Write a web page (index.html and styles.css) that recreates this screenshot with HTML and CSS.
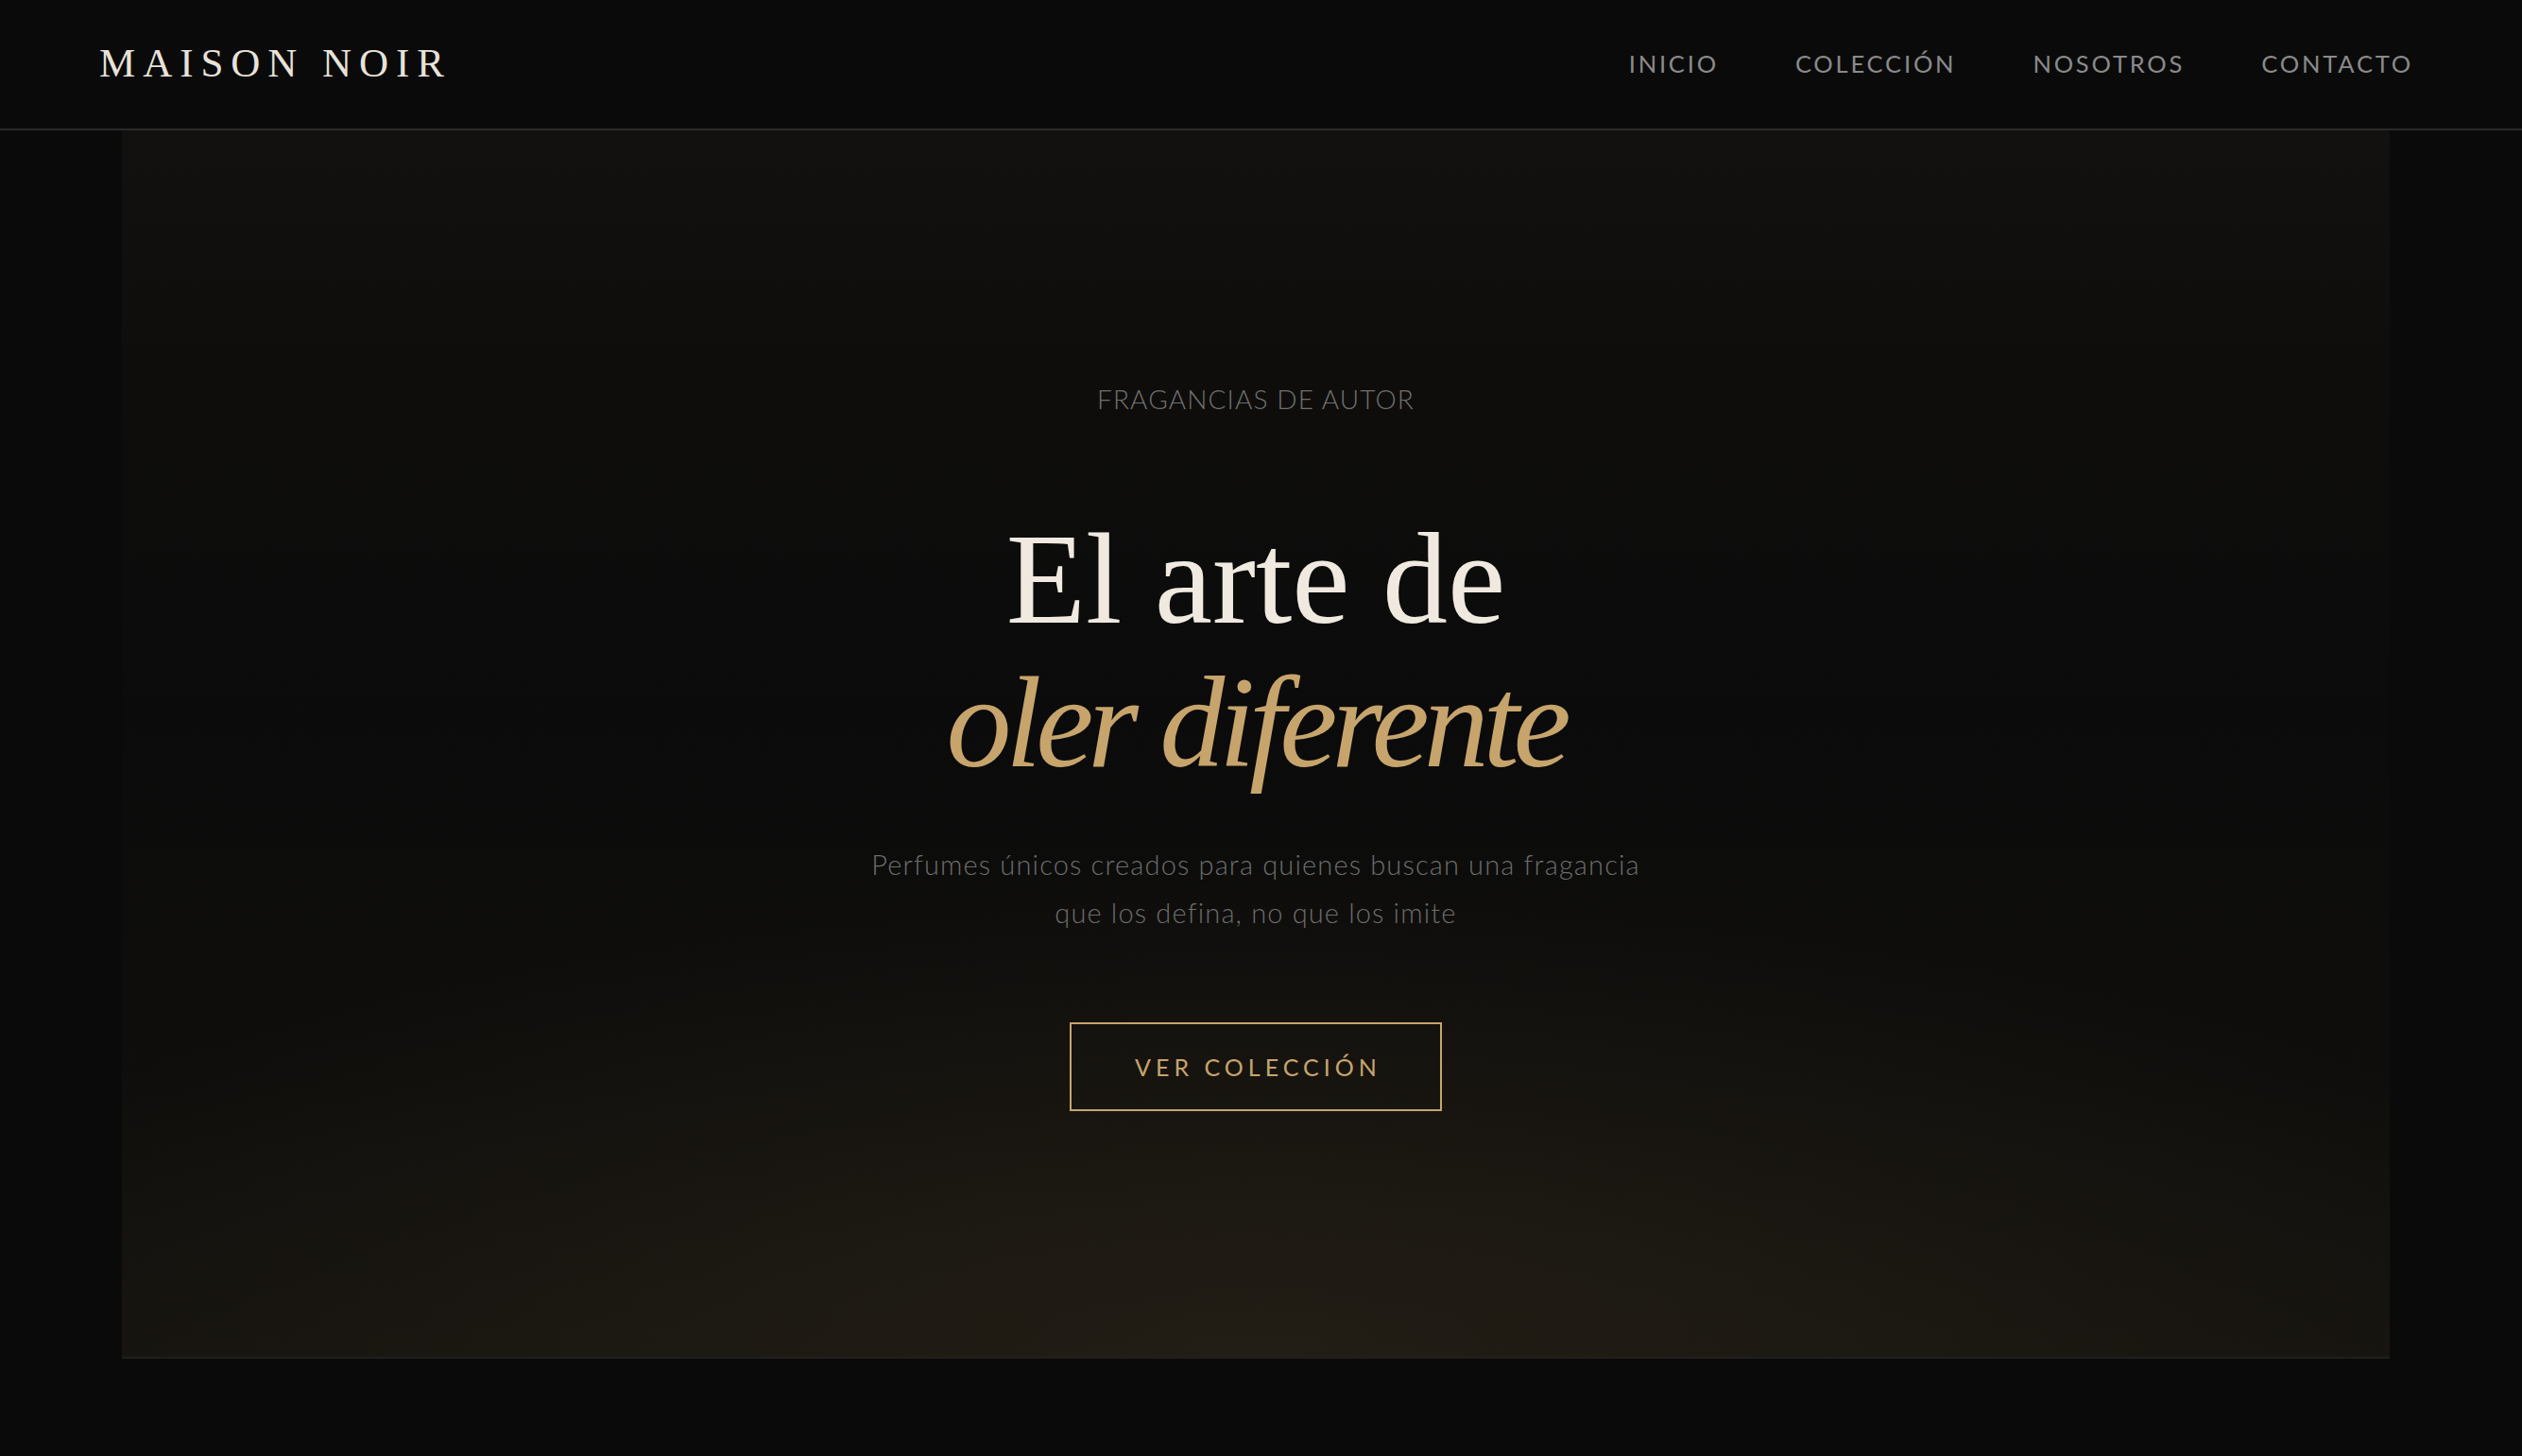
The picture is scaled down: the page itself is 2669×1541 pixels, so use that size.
FILE: index.html
```html
<!DOCTYPE html>
<html lang="es">
<head>
<meta charset="utf-8">
<title>Maison Noir</title>
<link rel="stylesheet" href="styles.css">
</head>
<body>
<header class="site-header">
  <div class="logo">MAISON NOIR</div>
  <nav class="nav">
    <a href="#" class="nav-link">INICIO</a>
    <a href="#" class="nav-link">COLECCIÓN</a>
    <a href="#" class="nav-link">NOSOTROS</a>
    <a href="#" class="nav-link">CONTACTO</a>
  </nav>
</header>
<main class="main">
  <section class="hero">
    <p class="eyebrow">FRAGANCIAS DE AUTOR</p>
    <h1 class="title">
      <span class="title-line">El arte de</span>
      <span class="title-line title-accent">oler diferente</span>
    </h1>
    <p class="lead">Perfumes únicos creados para quienes buscan una fragancia<br>que los defina, no que los imite</p>
    <a href="#" class="btn">VER COLECCIÓN</a>
  </section>
</main>
</body>
</html>
```

FILE: styles.css
```css
* { box-sizing: border-box; }

html, body {
  margin: 0;
  padding: 0;
  background: #0a0a0a;
  height: 100%;
  overflow: hidden;
}

body {
  font-family: "Lato", "Liberation Sans", sans-serif;
  color: #8c8c8c;
}

.site-header {
  height: 138px;
  display: flex;
  align-items: center;
  justify-content: space-between;
  padding: 0 115px 0 105px;
  border-bottom: 2px solid #2a2a2a;
  background: #0a0a0a;
}

.logo {
  font-family: "Liberation Serif", "DejaVu Serif", serif;
  font-size: 43px;
  letter-spacing: 0.185em;
  color: #e8e2d8;
  line-height: 1;
  margin-top: -4px;
}

.nav {
  display: flex;
  gap: 81px;
}

.nav-link {
  font-family: "Lato", "Liberation Sans", sans-serif;
  font-weight: 400;
  font-size: 25.5px;
  letter-spacing: 0.11em;
  color: #8a8a8a;
  text-decoration: none;
  line-height: 1;
}

.main {
  padding: 0 140px 0 129px;
  background: #0a0a0a;
  height: 1403px;
}

.hero {
  height: 1300px;
  display: flex;
  flex-direction: column;
  align-items: center;
  justify-content: center;
  text-align: center;
  border-bottom: 2px solid #1f1f1f;
  background:
    radial-gradient(ellipse 60% 40% at 50% 100%, rgba(40, 34, 24, 0.7), rgba(40, 34, 24, 0) 100%),
    linear-gradient(180deg, #12110f 0%, #0e0d0c 22%, #0b0b0b 48%, #0f0e0c 78%, #15130f 100%);
  padding-top: 8px;
}

.eyebrow {
  margin: 0;
  font-family: "Lato", "Liberation Sans", sans-serif;
  font-weight: 300;
  font-size: 28px;
  line-height: 1.2;
  letter-spacing: 0.04em;
  color: #707070;
}

.title {
  margin: 98px 0 0;
  font-family: "Liberation Serif", "DejaVu Serif", serif;
  font-weight: 400;
  font-size: 138px;
  line-height: 152px;
  color: #f0e9df;
}

.title-line {
  display: block;
}

.title-accent {
  font-style: italic;
  color: #c6a46b;
  letter-spacing: -0.045em;
}

.lead {
  margin: 48px 0 0;
  font-family: "Lato", "Liberation Sans", sans-serif;
  font-weight: 300;
  font-size: 29px;
  line-height: 51px;
  letter-spacing: 0.04em;
  color: #6c6c6c;
}

.btn {
  margin-top: 91px;
  display: inline-block;
  border: 2px solid #c6a46b;
  color: #c6a46b;
  text-decoration: none;
  font-family: "Lato", "Liberation Sans", sans-serif;
  font-weight: 400;
  font-size: 25px;
  letter-spacing: 0.2em;
  line-height: 90px;
  height: 94px;
  padding: 0 62px 0 67px;
}
```
